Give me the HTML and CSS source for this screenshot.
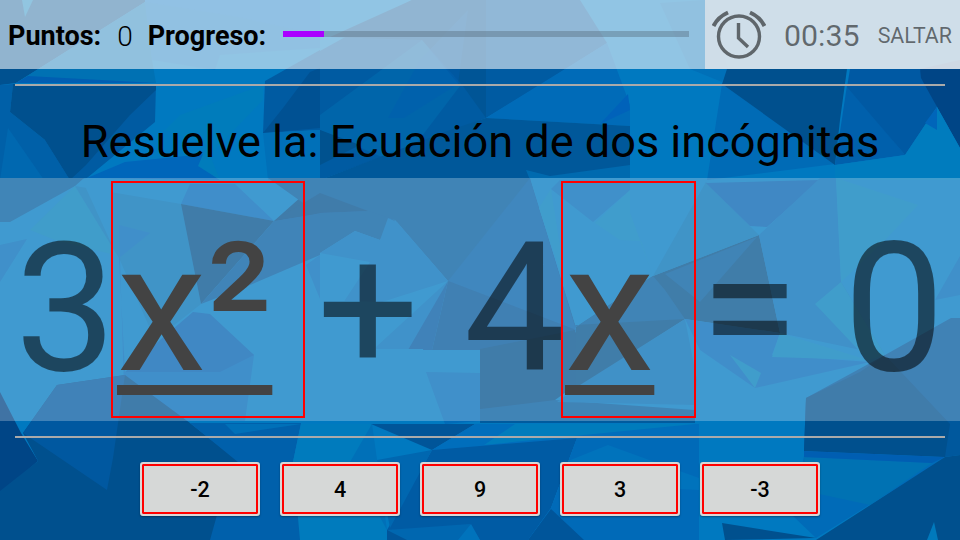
FILE: index.html
```html
<!DOCTYPE html>
<html lang="es">
<head>
<meta charset="utf-8">
<title>Ecuaciones</title>
<link rel="stylesheet" href="styles.css">
</head>
<body>
<svg class="backdrop" viewBox="0 0 960 540" preserveAspectRatio="none" aria-hidden="true">
<rect width="960" height="540" fill="#0079c0"/>
<!-- upper facets -->
<path fill="#005190" d="M0 0H145V2L16 83L0 85Z"/>
<path fill="#0079b8" d="M22 0H33L25 17Z"/>
<path fill="#0071b3" d="M145 2L16 83H156L152 60Z"/>
<path fill="#005eb2" d="M28 76L16 83H156Z"/>
<path fill="#006fc0" d="M145 2V0H320V35L238 17Z"/>
<path fill="#0069ba" d="M238 17L320 35V48L220 55L215 70L152 60L145 2Z" opacity=".45"/>
<path fill="#0060a8" d="M0 85L13 84L10 112L45 140L70 180H0Z"/>
<path fill="#0068b0" d="M8 128L44 180H0Z"/>
<path fill="#005ba2" d="M156 84L155 122L87 178L70 180L45 140L130 110Z"/>
<path fill="#00508e" d="M13 84H156V90L130 115L86 165L70 180L45 140L10 112Z"/>
<path fill="#0066ba" d="M87 178L125 162L205 154L200 166L220 180Z"/>
<path fill="#007cbb" d="M165 130L180 115L263 85V100L210 155L220 180L198 166L207 145Z"/>
<path fill="#005ba2" d="M265 81L320 50V130L263 133Z"/>
<path fill="#005193" d="M263 133L283 108L310 72L320 68V128Z"/>
<path fill="#0070b8" d="M263 133L320 130V180H268Z"/>
<path fill="#005ba2" d="M412 0H580L607 43L542 84L486 118L320 180V51Z"/>
<path fill="#005596" d="M412 0H486V118L463 86L422 40L330 37Z"/>
<path fill="#0065aa" d="M320 115L422 40L460 86L400 165L320 130Z"/>
<path fill="#005eb0" d="M468 10L420 60L388 118H404L458 84Z" opacity=".45"/>
<path fill="#00528f" d="M320 130L360 145L320 165Z"/>
<path fill="#006bb8" d="M486 118L607 43L630 105V126Z"/>
<path fill="#0062ba" d="M628 94L600 124L630 110Z"/>
<path fill="#00589a" d="M486 118L630 126V180H320L450 130Z"/>
<path fill="#006aaf" d="M526 170L550 176L630 165V180H530Z"/>
<path fill="#0070b8" d="M660 3L705 0L728 69L722 82L690 69Z"/>
<path fill="#006bb6" d="M722 84L835 164L707 180Z"/>
<path fill="#00508e" d="M727 69H847L840 120L835 165L722 84Z"/>
<path fill="#0060ac" d="M847 85L905 155L835 165Z"/>
<path fill="#0059a3" d="M850 69H920L937 107L905 155L847 87Z"/>
<path fill="#004586" d="M920 69L960 60V148L937 107L921 78Z"/>
<path fill="#007cbe" d="M937 107L905 155L835 165V180H960V148Z"/>
<path fill="#0065ba" d="M937 107L925 123L937 130Z"/>
<!-- middle facets -->
<path fill="#005c9f" d="M0 178H84L75 186L10 222H0Z"/>
<path fill="#007cb8" d="M75 186L30 230L55 240L119 256Z"/>
<path fill="#0070b5" d="M75 186L181 204L201 304L155 340L119 258Z"/>
<path fill="#0079c0" d="M84 184L112 190L112 245Z"/>
<path fill="#006ab9" d="M119 225L150 233L119 258L125 372H155L193 312L254 355L245 421H125Z"/>
<path fill="#0068b9" d="M190 184H235L274 221L181 204Z"/>
<path fill="#00508c" d="M181 204L274 221L201 304ZM274 221L320 180L368 211L320 214Z"/>
<path fill="#005ba0" d="M274 221L320 213V255L250 285L201 304Z"/>
<path fill="#0060b1" d="M160 340L193 312L210 314L254 355L220 372H125Z"/>
<path fill="#006bb8" d="M0 245L27 239L0 282ZM306 265L320 255V299Z"/>
<path fill="#005b9e" d="M268 178H530L576 327L560 350L448 281L395 220L388 218L360 215H320Z"/>
<path fill="#00508e" d="M320 193L368 211L320 213L274 221Z"/>
<path fill="#005b9e" d="M320 213L368 211L395 220L380 240L355 231L320 253Z"/>
<path fill="#006eb8" d="M320 253L355 231L380 240L388 218L397 222L448 281L410 350H320Z"/>
<path fill="#0079c0" d="M320 253L370 262L345 300L320 350ZM382 302L448 281L376 347ZM320 300L382 302L376 349H320Z"/>
<path fill="#0058a2" d="M448 281L432 350H408Z"/>
<path fill="#005fa8" d="M530 178L448 281L576 330Z"/>
<path fill="#00569a" d="M448 281L576 330L560 350H432Z"/>
<path fill="#0079c0" d="M530 178L576 327L653 276L706 182V178ZM320 349H423L426 372L445 424H320Z"/>
<path fill="#007dbb" d="M551 189L539 208L567 292ZM595 223L630 190V213L653 276L641 241L620 240Z"/>
<path fill="#006bb8" d="M551 189L593 222L630 190V180H560ZM426 372L480 373V421L445 424Z"/>
<path fill="#00508c" d="M480 349L575 330L590 375L555 400L552 423H480Z"/>
<path fill="#005b9e" d="M480 409L555 400L695 410V423H480Z"/>
<path fill="#00528c" d="M576 327L653 276L759 235L780 333L685 319L575 390Z"/>
<path fill="#005b9e" d="M576 327L653 276L665 290L685 319L575 325ZM665 274L757 237L700 302Z"/>
<path fill="#006db5" d="M685 319L580 385L557 402L695 405L697 380Z"/>
<path fill="#0070b5" d="M706 182L759 235L653 276Z"/>
<path fill="#0060b0" d="M706 183L820 180L767 227L750 226Z"/>
<path fill="#006cb7" d="M820 178H836L841 282L885 355L780 333L759 235Z"/>
<path fill="#007dba" d="M836 178L918 205L885 240L841 282ZM841 282L885 355L868 360L815 304Z"/>
<path fill="#0069b9" d="M685 319L780 333L772 355L870 362L755 388L700 350Z"/>
<path fill="#007dba" d="M780 333L868 360L772 357ZM730 355L761 373L755 388Z"/>
<path fill="#006bb8" d="M960 256L935 300L960 295Z"/>
<path fill="#00589d" d="M806 398L885 355L951 318H960V455L945 457L804 451Z"/>
<path fill="#00508e" d="M806 398L860 372L885 355L950 424L945 457L804 451Z"/>
<!-- lower facets -->
<path fill="#004586" d="M0 392L21 433L38 461L4 491H0Z"/>
<path fill="#00508e" d="M23 433L57 385L125 375L190 423L237 460L300 536V540H0V491L38 461Z"/>
<path fill="#0058a0" d="M57 385L125 375L113 458L107 490L23 433Z"/>
<path fill="#0060ab" d="M190 423H301L293 462L320 540H210L217 515L260 480Z"/>
<path fill="#0070b8" d="M225 424H301L235 434Z"/>
<path fill="#007bbd" d="M293 462L301 424H372L387 540H300Z"/>
<path fill="#0070b8" d="M372 424L387 530L350 462Z"/>
<path fill="#005599" d="M371 424H475L432 450Z"/>
<path fill="#006ebc" d="M475 424H699V440L432 450Z"/>
<path fill="#007cbc" d="M515 424H695L484 445Z"/>
<path fill="#005ba4" d="M432 450L577 438L551 508L528 540H387V530Z"/>
<path fill="#0067b0" d="M377 460L432 450L390 528ZM387 530L470 524L480 540H400Z"/>
<path fill="#0073bc" d="M458 540L471 524L480 540ZM551 508L577 438V480Z"/>
<path fill="#006ab8" d="M577 438H699V540H528L551 508Z"/>
<path fill="#00559a" d="M551 509L584 540H528ZM387 530L407 540H387Z"/>
<path fill="#0073bc" d="M568 461L608 445L699 478V490L640 487Z"/>
<path fill="#006bb8" d="M804 456L945 458L816 538L793 516Z"/>
<path fill="#0072b3" d="M804 457L932 463L870 505L810 492Z"/>
<path fill="#005eb2" d="M804 451L945 457L932 463L804 457Z"/>
<path fill="#00508e" d="M722 523L816 538L725 540ZM945 457L960 455V540H816Z"/>
<path fill="#0079bc" d="M934 522L938 540H927Z"/>
</svg>
<main class="game">
  <header class="bar">
    <div class="status">
      <b class="label">Puntos:</b><span class="score">0</span><b class="label">Progreso:</b>
      <div class="progress"><div class="fill"></div></div>
    </div>
    <div class="timer">
      <svg class="clock" viewBox="0 0 54 54" aria-hidden="true">
        <g fill="none" stroke="currentColor">
          <circle cx="27" cy="30.5" r="20.500" stroke-width="3.400"/>
          <path d="M26.500 17V32L36 41" stroke-width="3.400"/>
          <path d="M1.500 20Q6 11 16 6.500M38 6.500Q48 11 52.500 20" stroke-width="4"/>
        </g>
      </svg>
      <span class="time">00:35</span>
      <span class="skip">SALTAR</span>
    </div>
  </header>
  <hr class="rule">
  <h1 class="title">Resuelve la: Ecuación de dos incógnitas</h1>
  <section class="equation">
    <span class="term first">3</span><span class="slot wide"><u>x²</u></span><span class="term plus">+ 4</span><span class="slot narrow"><u>x</u></span><span class="term equals">= 0</span>
  </section>
  <hr class="rule">
  <nav class="answers">
    <button>-2</button><button>4</button><button>9</button><button>3</button><button>-3</button>
  </nav>
</main>
</body>
</html>
```
FILE: styles.css
```css
* { box-sizing: border-box; }
body { margin: 0; width: 960px; height: 540px; overflow: hidden; font-family: Roboto, sans-serif; color: #000; }
.backdrop { position: absolute; left: 0; top: 0; width: 960px; height: 540px; }
.game { position: relative; height: 540px; display: flex; flex-direction: column; }
.bar { height: 69px; display: flex; background: rgba(255,255,255,.57); }
.status { width: 705px; padding-left: 8px; display: flex; align-items: center; padding-top: 3px; font-size: 27px; white-space: nowrap; }
.label { font-weight: 700; }
.score { margin: 0 15px 0 16px; font-size: 28px; font-weight: 350; }
.progress { width: 406px; height: 6px; margin: 0 16px 0 auto; background: rgba(80,100,115,.38); position: relative; top: -2px; }
.fill { width: 10.1%; height: 100%; background: #a0f; }
.timer { width: 255px; display: flex; align-items: center; background: rgba(222,227,234,.8); color: rgba(0,0,0,.54); padding: 0 8px 0 7px; }
.clock { width: 54px; height: 54px; margin-top: -3px; filter: blur(.5px); }
.time { font-size: 30.300px; margin-left: 18px; padding-top: 2px; }
.skip { font-size: 21.400px; margin-left: auto; padding-top: 2px; }
.rule { border: 0; height: 2px; width: 930px; margin: 15px 15px 0; background: #aaa; flex: none; }
.title { margin: 0; height: 92px; padding-top: 19px; font-size: 45.100px; line-height: 74px; font-weight: 400; text-align: center; white-space: nowrap; }
.equation { height: 243px; flex: none; display: flex; align-items: flex-start; padding: 3px 0 0 10px; background: rgba(255,255,255,.25); font-size: 180px; line-height: 255px; white-space: pre; }
.term { color: rgba(0,0,0,.54); height: 237px; }
.first { width: 101px; padding-left: 5px; }
.plus { width: 245px; margin-left: 12px; }
.equals { margin-left: 4px; }
.slot { height: 237px; border: 2px solid #f00; padding-left: 4px; line-height: 251px; color: #434343; flex: none; position: relative; }
.slot u { text-decoration-thickness: 10px; text-underline-offset: 15px; text-decoration-skip-ink: none; }
.wide { width: 194px; }
.narrow { width: 135px; margin-left: -1px; padding-left: 2px; }
.answers { display: flex; justify-content: center; gap: 20px; padding-top: 24px; }
button { width: 120px; height: 54px; padding: 1px 0 0; border: 2px solid #d6d8d8; border-radius: 3px; background: #d6d8d7; box-shadow: inset 0 0 0 2px #f00, 0 1px 2px rgba(0,0,0,.35); font: 500 21.500px Roboto, sans-serif; color: #000; }
```
